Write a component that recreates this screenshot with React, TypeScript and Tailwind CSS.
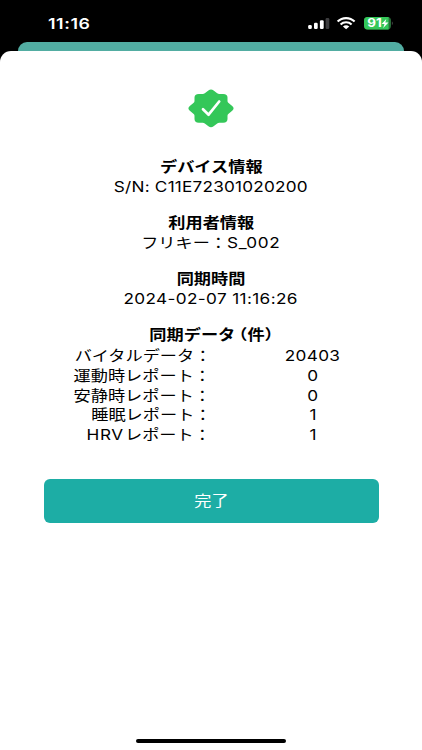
import type { ReactNode } from 'react';

const sections = [
  { title: 'デバイス情報', value: <span className="tracking-[0.18px]">S/N: C11E72301020200</span> },
  { title: '利用者情報', value: <>フリキー：<span className="tracking-[0.5px]">S_002</span></> },
  { title: '同期時間', value: <span className="tracking-[0.31px]">2024-02-07 11:16:26</span> },
];

const counts = [
  { id: 'vital', label: 'バイタルデータ：', value: '20403' },
  { id: 'exercise', label: '運動時レポート：', value: '0' },
  { id: 'rest', label: '安静時レポート：', value: '0' },
  { id: 'sleep', label: '睡眠レポート：', value: '1' },
  { id: 'hrv', label: <><span className="mr-px tracking-[0.5px]">HRV</span>レポート：</>, value: '1' },
];

function Wide({ children, className = 'origin-center' }: { children: ReactNode; className?: string }) {
  return <span className={`inline-block scale-x-[1.185] whitespace-nowrap ${className}`}>{children}</span>;
}

function StatusBar() {
  return (
    <div className="flex h-[42px] items-start justify-between pl-[48px] pr-[29px] pt-[13px] text-white">
      <div className="text-[15px] font-semibold leading-[21px] tracking-[0.5px]">
        <Wide className="origin-left">11:16</Wide>
      </div>
      <svg className="mt-[3px]" width="86" height="15" viewBox="0 0 86 15">
        <rect x="1.2" y="9" width="3.6" height="4" rx="1.3" fill="#fff" />
        <rect x="7" y="6.7" width="3.7" height="6.3" rx="1.2" fill="#fff" />
        <rect x="12.9" y="4.2" width="3.8" height="8.8" rx="1.2" fill="#fff" />
        <rect x="18.6" y="2" width="3.7" height="11" rx="1.2" fill="#3c3c3e" />
        <g fill="none" stroke="#fff" strokeWidth="2.1">
          <path d="M30.6 5.6C35.4.9 42.8.9 47.6 5.6" />
          <path d="M33.6 8.4C36.6 5.5 41.6 5.5 44.6 8.4" />
        </g>
        <path d="M35.9 10.4C37.8 8.8 40.4 8.8 42.3 10.4L39.1 13.2Z" fill="#fff" />
        <rect x="57" y="1" width="27" height="12.4" rx="3.6" fill="#286b38" />
        <path d="M60.6 1H81.6V13.4H60.6A3.6 3.6 0 0 1 57 9.8V4.6A3.6 3.6 0 0 1 60.6 1Z" fill="#34c759" />
        <path d="M84.9 5.5C86.1 6 86.1 8.5 84.9 9Z" fill="#4b4b4d" />
        <text x="60.2" y="11.3" fontSize="11.3" fontWeight="700" fill="#fff" textLength="14.5" lengthAdjust="spacingAndGlyphs">91</text>
        <path d="M79.3 3L74.6 8H77.5L76.2 12L81.5 6.5H78.3Z" fill="#fff" />
      </svg>
    </div>
  );
}

function VerifiedBadge() {
  return (
    <svg width="46" height="39" viewBox="0 0 46 39" fill="none">
      <path
        d="M20.4 1.4Q23 -.5 25.6 1.4L29.2 4.3Q30.1 4.9 31.3 4.9H35.2Q39.5 4.9 39.5 8.6V12Q39.5 13 40.3 13.7L44.2 17Q47 19.3 44.2 21.7L40.3 25Q39.5 25.7 39.5 26.7V30.1Q39.5 33.8 35.2 33.8H31.3Q30.1 33.8 29.2 34.4L25.6 37.3Q23 39.2 20.4 37.3L16.8 34.4Q15.9 33.8 14.7 33.8H10.8Q6.5 33.8 6.5 30.1V26.7Q6.5 25.7 5.7 25L1.8 21.7Q-1 19.3 1.8 17L5.7 13.7Q6.5 13 6.5 12V8.6Q6.5 4.9 10.8 4.9H14.7Q15.9 4.9 16.8 4.3Z"
        fill="#34c759"
      />
      <path d="M15 20.2L20.6 25.7L31.2 12.5" stroke="#fff" strokeWidth="2.7" strokeLinecap="round" strokeLinejoin="round" />
    </svg>
  );
}

export default function App() {
  return (
    <div className="flex h-[750px] w-[422px] flex-col overflow-hidden bg-black font-['Inter','Noto_Sans_CJK_JP',sans-serif] text-[14.5px] leading-5 text-black">
      <StatusBar />
      <div className="mx-[18px] h-[9px] shrink-0 rounded-t-[9px] bg-[#52ada2]" />
      <main className="flex flex-1 flex-col items-center rounded-t-[11px] bg-white pt-[38px]">
        <VerifiedBadge />
        <div className="mt-[29px] flex flex-col gap-4 text-center">
          {sections.map(({ title, value }) => (
            <section key={title}>
              <h2 className="font-bold"><Wide>{title}</Wide></h2>
              <p><Wide>{value}</Wide></p>
            </section>
          ))}
          <h2 className="font-bold">
            <Wide>同期データ<span className="ml-[3px] [font-feature-settings:'halt']">（件）</span></Wide>
          </h2>
        </div>
        <dl className="mt-px w-full">
          {counts.map(({ id, label, value }) => (
            <div key={id} className="grid h-[19.8px] grid-cols-2 pr-[7px]">
              <dt className="-mr-[3.5px] text-right"><Wide className="origin-right">{label}</Wide></dt>
              <dd className="pl-[3px] text-center tracking-[0.3px]"><Wide>{value}</Wide></dd>
            </div>
          ))}
        </dl>
        <button className="mt-[34px] h-[44px] w-[335px] rounded-[6px] bg-[#1dada5] text-white">
          <Wide>完了</Wide>
        </button>
        <div className="mb-[7px] mt-auto h-[4px] w-[150px] rounded-full bg-black" />
      </main>
    </div>
  );
}
